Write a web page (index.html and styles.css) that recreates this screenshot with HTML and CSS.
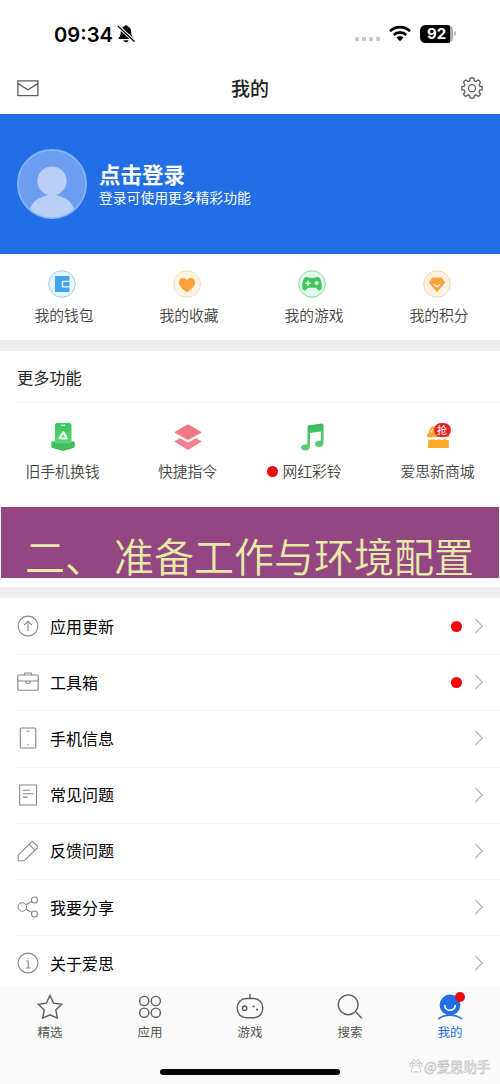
FILE: index.html
```
<!DOCTYPE html>
<html lang="zh-CN">
<head>
<meta charset="utf-8">
<title>我的</title>
<link rel="stylesheet" href="styles.css">
</head>
<body>
<div class="page">
  <header class="status">
    <div class="clock">09:34
      <svg class="bell" width="18" height="20" viewBox="0 0 18 20"><path d="M9 1.200c-1 0-1.600.6-1.800 1.400C4.900 3.400 3.800 5.300 3.800 8c0 3.500-1 4.500-2.200 6v1h14.800v-1C15.200 12.500 14.200 11.500 14.200 8c0-2.700-1.100-4.600-3.400-5.400C10.600 1.800 10 1.200 9 1.200zM6.500 16.200c.3 1.300 1.200 2 2.500 2s2.200-.7 2.500-2z" fill="#000"/><path d="M1.500 2.500l15.500 14.500" stroke="#fff" stroke-width="3.200"/><path d="M1.300 2.400l15.800 14.800" stroke="#000" stroke-width="1.300" stroke-linecap="round"/></svg>
    </div>
    <div class="signals">
      <div class="cell"><i></i><i></i><i></i><i></i></div>
      <svg class="wifi" width="22" height="17" viewBox="0 0 22 17" fill="none" stroke="#000" stroke-width="2.700"><path d="M1 6.200c5.700-5.400 14.300-5.400 20 0"/><path d="M4.700 9.900c3.600-3.300 9-3.300 12.600 0"/><path d="M7.500 12.600c2-1.900 5-1.900 7 0L11 16.200z" fill="#000" stroke="none"/></svg>
      <div class="battery">92</div><div class="nub"></div>
    </div>
  </header>
  <nav class="topbar">
    <svg width="22" height="17" viewBox="0 0 22 17" fill="none" stroke="#5c5c5c" stroke-width="1.300"><path d="M.9.9h20v14.700H.9zM1 3.600l9.900 6.200 9.900-6.200"/></svg>
    <h1>我的</h1>
    <svg width="22" height="22" viewBox="0 0 22 22" fill="none" stroke="#5c5c5c" stroke-width="1.300" stroke-linejoin="round"><path d="M9.200 1h3.600l.5 2.800 1.700.7 2.400-1.600 2.200 2.300-1.500 2.300.7 1.700 2.400.5v3l-2.400.5-.7 1.700 1.500 2.400-2.200 2.200-2.400-1.600-1.700.7-.5 2.500H9.200l-.5-2.500-1.700-.7-2.400 1.600-2.200-2.200 1.500-2.400-.7-1.700L.8 12.700v-3l2.400-.5.700-1.700-1.500-2.300 2.200-2.300L7 4.500l1.700-.7z"/><circle cx="11" cy="11.200" r="3.500"/></svg>
  </nav>
  <section class="login">
    <svg width="70" height="70" viewBox="0 0 70 70"><defs><clipPath id="face"><circle cx="35" cy="35" r="34"/></clipPath></defs><circle cx="35" cy="35" r="34" fill="#6c9df0"/><g fill="#b9cff7" clip-path="url(#face)"><circle cx="35" cy="32" r="14.600"/><ellipse cx="35" cy="65" rx="23" ry="19"/></g><circle cx="35" cy="35" r="34.100" fill="none" stroke="#86bbf8" stroke-width="1.700"/></svg>
    <div><h2>点击登录</h2><p>登录可使用更多精彩功能</p></div>
  </section>
  <section class="quick">
    <div class="item"><svg width="28" height="28" viewBox="0 0 28 28"><circle cx="14" cy="14" r="13.300" fill="#e7f6fe" stroke="#a1cdec"/><path d="M7 6h14.500v4.700h-7.700v6.800h7.700V22H7z" fill="#40a2ec"/><path d="M15.200 12h6.300v4.200h-6.300z" fill="#40a2ec"/></svg><span>我的钱包</span></div>
    <div class="item"><svg width="28" height="28" viewBox="0 0 28 28"><circle cx="14" cy="14" r="13.300" fill="#fff4e6" stroke="#fbdcb5"/><path d="M14 22.300C8.500 18.500 6 15.500 6 12.400c0-4.500 5.500-5.800 8-2.300 2.500-3.500 8-2.200 8 2.300 0 3.100-2.500 6.100-8 9.900z" fill="#fda13c"/></svg><span>我的收藏</span></div>
    <div class="item"><svg width="28" height="28" viewBox="0 0 28 28"><circle cx="14" cy="14" r="13.300" fill="#e4faeb" stroke="#8bdca1"/><path d="M8.500 7c2 0 2.500 1 5.500 1s3.500-1 5.500-1c3 0 4.200 5 4.200 9.500 0 4.500-2.700 5.500-4.500 2.500-.7-1-1.200-1.200-2.200-1.200h-6c-1 0-1.500.2-2.200 1.200-1.800 3-4.500 2-4.500-2.500C4.300 12 5.500 7 8.500 7z" fill="#43c260"/><path d="M10 10.800v5M7.500 13.300h5" stroke="#eafff0" stroke-width="1.600"/><circle cx="18.700" cy="13" r="2" fill="#eafff0"/></svg><span>我的游戏</span></div>
    <div class="item"><svg width="28" height="28" viewBox="0 0 28 28"><circle cx="14" cy="14" r="13.300" fill="#fff3e3" stroke="#fbd4a8"/><path d="M9.300 7.500h9.400l3.500 5.100L14 22.200l-8.200-9.600z" fill="#fda13c"/><path d="M10.800 14.300l3.200 2.500 3.200-2.500" fill="none" stroke="#fff" stroke-width="1.100"/></svg><span>我的积分</span></div>
  </section>
  <section class="more">
    <h3>更多功能</h3>
    <div class="tools">
      <div class="item"><svg width="28" height="30" viewBox="0 0 28 30"><defs><linearGradient id="phone" x2="0" y2="1"><stop stop-color="#38c658"/><stop offset="1" stop-color="#60d379"/></linearGradient></defs><path d="M2.500 19.500h23v6L14 29 2.500 25.500z" fill="#35b451"/><rect x="6" y="1" width="16.500" height="22" rx="2" fill="url(#phone)"/><path d="M2.500 20.500L6 21.500h16.500l3-1v4L14 28 2.500 24.500z" fill="#43be5e"/><path d="M11.800 3.300h4.500" stroke="#e1fce8" stroke-width="1.200"/><path d="M14.200 10.200l3.700 6.100h-7.400z" fill="none" stroke="#e9ffef" stroke-width="2.300" stroke-linejoin="round" stroke-dasharray="6 1.100"/></svg><span>旧手机换钱</span></div>
      <div class="item"><svg width="30" height="30" viewBox="0 0 30 30"><defs><linearGradient id="layer"><stop stop-color="#f67c8a"/><stop offset="1" stop-color="#e77784"/></linearGradient></defs><path d="M15 2.200l12.800 7.500c.5.400.5.900 0 1.200L15 18 2.200 10.900c-.6-.4-.6-.8 0-1.200z" fill="url(#layer)"/><path d="M7 16.200l8 4.400 8-4.400 5 2.700c.4.400.4.700 0 1L15 28 2 19.900c-.4-.3-.4-.7 0-1z" fill="#f5808f"/></svg><span>快捷指令</span></div>
      <div class="item"><svg width="28" height="30" viewBox="0 0 28 30"><defs><linearGradient id="note" x2="0" y2="1"><stop stop-color="#38bd5b"/><stop offset="1" stop-color="#61ce7a"/></linearGradient></defs><path d="M8.500 5Q8.500 3.400 10 3.200L23 1.600q1.500 0 1.500 1.500V20.500c0 3-2 4.500-4.800 4.500-5 0-5-5.600 0-5.900 1.500 0 2.300-.4 2.300-1.700V9.500L11 11v13c0 3-2 4.500-5 4.500-5.500 0-5-5.800.2-6 1.500 0 2.300-.5 2.300-1.800z" fill="url(#note)"/></svg><span class="ring">网红彩铃</span></div>
      <div class="item"><div class="shop"><svg width="26" height="30" viewBox="0 0 26 30"><path d="M8 4.500h12l4 8.500v2.300H2.500C1 13 2.500 11.500 4 11c0-3 1.500-6.500 4-6.500z" fill="#f5a82d"/><path d="M3.300 17c2 1.400 3.500 1.400 5 0 2 1.400 4 1.400 5.500 0 2 1.400 4 1.400 5.500 0h4.500V26H3z" fill="#f8aa25"/><path d="M3 15.800c1.600 2 4 2 5.500 0 1.600 2 4 2 5.500 0 1.600 2 4 2 5.500 0 1.200 1.600 2.700 2 4.500 1.500" fill="none" stroke="#fff" stroke-width="1.200"/><path d="M6 10.500q.3-2 1.800-3" fill="none" stroke="#ffe9bf" stroke-width="1.300"/></svg><b>抢</b></div><span>爱思新商城</span></div>
    </div>
    <div class="banner">二、 准备工作与环境配置</div>
  </section>
  <main class="list">
    <div class="row"><svg class="icon" viewBox="0 0 22 22"><circle cx="11" cy="11" r="9.900"/><path d="M11 16.300V6.200M7.200 10L11 6.200 14.800 10"/></svg><span>应用更新</span><i class="dot"></i><svg class="arrow" viewBox="0 0 10 16"><path d="M1.200.9l7 7.100-7 7.100"/></svg></div>
    <div class="row"><svg class="icon" viewBox="0 0 22 22"><rect x=".8" y="4" width="20.400" height="15.200" rx="1"/><path d="M7 4l.7-2h6.600l.7 2M1 10h7.500M13.500 10H21M8.500 10c0 3.300 5 3.300 5 0z"/></svg><span>工具箱</span><i class="dot"></i><svg class="arrow" viewBox="0 0 10 16"><path d="M1.200.9l7 7.100-7 7.100"/></svg></div>
    <div class="row"><svg class="icon" viewBox="0 0 22 22"><rect x="3.300" y="1" width="15.500" height="20" rx="1"/><path d="M9.500 4.300h3M10.300 17.800h1.500"/></svg><span>手机信息</span><svg class="arrow" viewBox="0 0 10 16"><path d="M1.200.9l7 7.100-7 7.100"/></svg></div>
    <div class="row"><svg class="icon" viewBox="0 0 22 22"><path d="M2.700 1h16.800v20H2.700zM6 6.300h6.800M6 9.700h10.500M6 13.100h4.500"/></svg><span>常见问题</span><svg class="arrow" viewBox="0 0 10 16"><path d="M1.200.9l7 7.100-7 7.100"/></svg></div>
    <div class="row"><svg class="icon" viewBox="0 0 22 22"><path d="M1.200 20.800v-5.600L14.300 2.200q1.100-1 2.200 0l3.700 3.800q.9 1 0 2L7.200 20.800zM12.100 4.400l5.800 5.800"/></svg><span>反馈问题</span><svg class="arrow" viewBox="0 0 10 16"><path d="M1.200.9l7 7.100-7 7.100"/></svg></div>
    <div class="row"><svg class="icon" viewBox="0 0 22 22"><circle cx="5.300" cy="11" r="4.200"/><circle cx="17.500" cy="4" r="3"/><circle cx="17.500" cy="18" r="3"/><path d="M9 8.800l5.800-3.300M9 13.200l5.800 3.300"/></svg><span>我要分享</span><svg class="arrow" viewBox="0 0 10 16"><path d="M1.200.9l7 7.100-7 7.100"/></svg></div>
    <div class="row"><svg class="icon" viewBox="0 0 22 22"><circle cx="11" cy="11" r="9.900"/><path d="M9.200 9h2v7M8.800 16h4.700M10.300 6.200h1.300"/></svg><span>关于爱思</span><svg class="arrow" viewBox="0 0 10 16"><path d="M1.200.9l7 7.100-7 7.100"/></svg></div>
  </main>
  <footer class="tabs">
    <div class="tab"><svg viewBox="0 0 30 28"><path d="M15 2.500l3.600 7.600 8.100 1.100-5.900 5.700 1.500 8.200L15 21.800l-7.300 3.300 1.500-8.200-5.900-5.700 8.100-1.100z"/></svg>精选</div>
    <div class="tab"><svg viewBox="0 0 30 28"><circle cx="9.200" cy="8" r="4.600"/><circle cx="20.800" cy="8" r="4.600"/><circle cx="9.200" cy="19.700" r="4.600"/><circle cx="20.800" cy="19.700" r="4.600"/></svg>应用</div>
    <div class="tab"><svg viewBox="0 0 30 28"><path d="M15 1v4.500M11.500 5.500h7c5.500 0 9.300 4 9.300 9.500s-3.800 9.700-9.300 9.700h-7c-5.500 0-9.300-4.200-9.300-9.700s3.800-9.500 9.300-9.500z"/><circle cx="9.600" cy="15.200" r="2.200"/><g class="solid"><circle cx="18.500" cy="13.500" r="1.100"/><circle cx="22" cy="16.500" r="1.100"/></g></svg>游戏</div>
    <div class="tab"><svg viewBox="0 0 30 28"><circle cx="13.200" cy="11.800" r="9.900"/><path d="M21 19.200l5.800 6"/></svg>搜索</div>
    <div class="tab active"><svg viewBox="0 0 30 28"><circle class="solid" cx="15" cy="12" r="10.400"/><path d="M3 26c6.500-5 17.500-5 24 0"/><path class="smile" d="M9.700 12c0 7 10.600 7 10.600 0"/></svg>我的<i class="dot"></i></div>
    <div class="home"></div>
    <div class="mark"><svg width="14" height="14" viewBox="0 0 14 14"><ellipse cx="2.300" cy="6" rx="1.400" ry="2"/><ellipse cx="5" cy="2.700" rx="1.400" ry="2"/><ellipse cx="9" cy="2.700" rx="1.400" ry="2"/><ellipse cx="11.700" cy="6" rx="1.400" ry="2"/><path d="M7 6c2 0 3 3 4.300 4.300 1.500 1.600 0 3-1.800 2.700-2-.4-3-.4-5 0-1.800.3-3.300-1.100-1.800-2.700C4 9 5 6 7 6z"/></svg>@爱思助手</div>
  </footer>
</div>
</body>
</html>
```
FILE: styles.css
```
* { box-sizing: border-box; margin: 0; padding: 0; }
body { font-family: "Noto Sans CJK SC", sans-serif; background: #fff; color: #111; }
svg { display: block; flex: none; }
.page { width: 500px; height: 1084px; display: flex; flex-direction: column; overflow: hidden; }
.page > * { flex: none; }
.status { height: 63px; display: flex; justify-content: space-between; padding: 0 44px 0 54px; font-family: Inter, sans-serif; }
.clock { display: flex; align-items: center; gap: 4px; height: 68px; font-size: 20.200px; font-weight: 600; color: #000; }
.signals { display: flex; align-items: center; height: 67px; }
.cell { display: flex; gap: 3px; margin: 11px 9px 0 0; }
.cell i { width: 4px; height: 4px; border-radius: 1px; background: #c8c8c8; }
.wifi { margin-right: 9px; }
.battery { width: 33px; height: 18px; border-radius: 5.500px; background: linear-gradient(90deg, #000 30.500px, #aaa 30.500px); color: #fff; font-size: 15px; font-weight: 700; line-height: 18px; text-align: center; }
.nub { width: 2px; height: 5px; margin-left: 1px; border-radius: 0 2px 2px 0; background: #bbb; }
.topbar { height: 51px; display: flex; align-items: center; justify-content: space-between; padding: 0 17px 1px; }
.topbar h1 { margin-bottom: 2px; font-size: 19px; font-weight: 500; color: #222; }
.login { height: 140px; display: flex; align-items: center; gap: 12px; padding-left: 17px; background: #226ee6; color: #fff; }
.login h2 { font-size: 21.500px; line-height: 27px; font-weight: 700; }
.login p { margin-bottom: 2px; font-size: 13.800px; line-height: 20px; }
.quick { height: 97px; display: grid; grid-template-columns: repeat(4, 1fr); padding-top: 16px; border-bottom: 11px solid #eee; }
.item { display: flex; flex-direction: column; align-items: center; font-size: 14.800px; font-weight: 350; line-height: 22px; color: #444; white-space: nowrap; }
.quick svg { margin-right: 1px; }
.quick span { margin: 6px 0 0 3px; }
.more { height: 247px; border-bottom: 11px solid #eee; }
.more h3 { height: 51px; padding: 1px 0 0 17px; font-size: 16.200px; font-weight: 400; line-height: 51px; color: #222; }
.tools { height: 105px; display: grid; grid-template-columns: repeat(4, 1fr); padding-top: 20px; background: linear-gradient(#f5f5f5, #f5f5f5) 17px 0 / 483px 1px no-repeat; }
.tools .item > span { margin-top: 8px; }
.tools svg { height: 30px; }
.tools .item > .ring { display: flex; align-items: center; gap: 4px; margin-right: 16px; }
.ring::before, .dot { content: ""; width: 11px; height: 11px; border-radius: 50%; background: #f30509; }
.shop { position: relative; }
.shop b { position: absolute; left: 9px; top: 1px; width: 17px; height: 14px; border-radius: 7px; background: #e8262a; color: #fff; font-size: 10px; font-weight: 400; line-height: 13px; text-align: center; }
.banner { height: 71px; margin: 0 1px; padding: 25px 0 0 24px; background: #934682; color: #e5eba7; font-size: 40px; font-weight: 350; line-height: 46px; white-space: nowrap; }
.page > .list { flex: 1; min-height: 0; overflow: hidden; }
.row { height: 56.200px; display: flex; align-items: center; padding: 0 16px 0 17px; font-size: 16px; color: #000; }
.row + .row { background: linear-gradient(#f4f4f4, #f4f4f4) 17px 0 / 483px 1px no-repeat; }
.row span { flex: 1; margin: 0 0 1px 11px; }
.row .dot { margin-right: 12px; }
.icon { width: 22px; height: 22px; fill: none; stroke: #888; stroke-width: 1.100; }
.arrow { width: 10px; height: 16px; fill: none; stroke: #b5b5b5; stroke-width: 1.300; }
.tabs { position: relative; height: 97px; display: grid; grid-template-columns: repeat(5, 1fr); padding-top: 6px; background: #fafafa; }
.tab { position: relative; display: flex; flex-direction: column; align-items: center; font-size: 12.500px; line-height: 21px; color: #555; }
.tab svg { width: 30px; height: 28px; fill: none; stroke: #5d5d5d; stroke-width: 1.400; }
.tab .solid { fill: #5d5d5d; stroke: none; }
.tab.active { color: #2369dc; }
.tab.active svg { stroke: #226ee6; }
.tab.active .solid { fill: #226ee6; }
.tab .smile { stroke: #fff; stroke-width: 1.600; }
.tab .dot { position: absolute; left: 55px; top: -1px; width: 10px; height: 10px; }
.home { position: absolute; left: 160px; top: 82px; width: 180px; height: 6px; border-radius: 3px; background: #000; }
.mark { position: absolute; left: 409px; top: 70px; display: flex; align-items: center; gap: 1px; font-size: 13.400px; line-height: 18px; color: #fff; -webkit-text-stroke: .5px #b5b5b5; white-space: nowrap; }
.mark svg { fill: #fff; stroke: #b5b5b5; stroke-width: .8; }
```
